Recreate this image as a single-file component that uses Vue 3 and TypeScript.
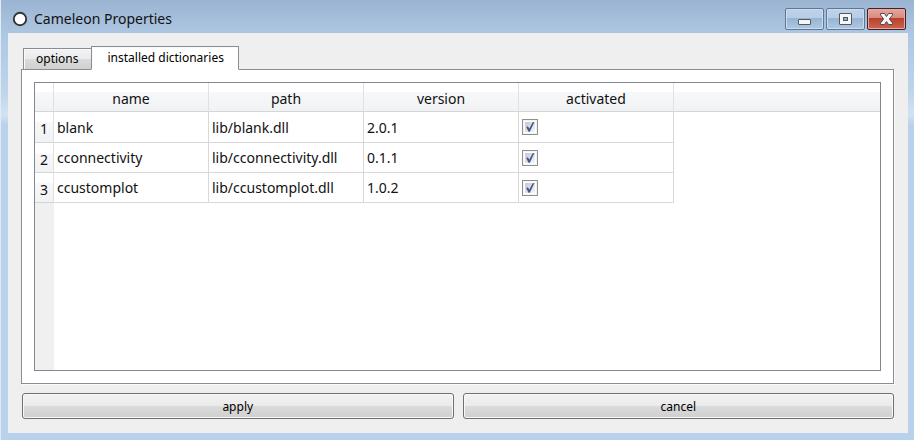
<script setup lang="ts">
import { ref } from 'vue'

interface Dictionary {
  name: string
  path: string
  version: string
  activated: boolean
}

const activeTab = ref<'options' | 'dictionaries'>('dictionaries')
const columns: string[] = ['name', 'path', 'version', 'activated']
const dictionaries = ref<Dictionary[]>([
  { name: 'blank', path: 'lib/blank.dll', version: '2.0.1', activated: true },
  { name: 'cconnectivity', path: 'lib/cconnectivity.dll', version: '0.1.1', activated: true },
  { name: 'ccustomplot', path: 'lib/ccustomplot.dll', version: '1.0.2', activated: true },
])
</script>

<template>
  <div class="window">
    <header class="titlebar">
      <svg class="app-icon" viewBox="0 0 16 16" aria-hidden="true">
        <circle cx="8" cy="8" r="6.2" fill="#fff" stroke="#333638" stroke-width="1.9" />
      </svg>
      <h1 class="title">Cameleon Properties</h1>
      <div class="controls">
        <button class="control" type="button" aria-label="Minimize">
          <svg viewBox="0 0 37 20" aria-hidden="true">
            <rect x="12.5" y="10.5" width="12" height="5" rx="0.5" fill="#f6f6f6" stroke="#505866" />
          </svg>
        </button>
        <button class="control" type="button" aria-label="Maximize">
          <svg viewBox="0 0 37 20" aria-hidden="true">
            <rect x="12.5" y="4.500" width="12" height="11" rx="0.5" fill="#f6f6f6" stroke="#505866" />
            <rect x="16.500" y="8.500" width="4" height="3" fill="#91adca" stroke="#505866" />
          </svg>
        </button>
        <button class="control close" type="button" aria-label="Close">
          <svg viewBox="0 0 37 20" aria-hidden="true">
            <path
              d="M12.500 4.500h4l2 3 2-3h4v1.500l-3.200 4 3.200 4v1.500h-4l-2-3-2 3h-4v-1.500l3.200-4-3.200-4z"
              fill="#f6f6f6"
              stroke="#5b4a52"
              stroke-linejoin="round"
            />
          </svg>
        </button>
      </div>
    </header>

    <main class="content">
      <div class="tabs" role="tablist">
        <button
          class="tab"
          :class="{ active: activeTab === 'options' }"
          type="button"
          role="tab"
          :aria-selected="activeTab === 'options'"
          @click="activeTab = 'options'"
        >
          options
        </button>
        <button
          class="tab"
          :class="{ active: activeTab === 'dictionaries' }"
          type="button"
          role="tab"
          :aria-selected="activeTab === 'dictionaries'"
          @click="activeTab = 'dictionaries'"
        >
          installed dictionaries
        </button>
      </div>

      <section class="panel" role="tabpanel">
        <div v-if="activeTab === 'dictionaries'" class="table-view">
          <table>
            <colgroup>
              <col class="index-col" />
              <col v-for="column in columns" :key="column" class="data-col" />
              <col />
            </colgroup>
            <thead>
              <tr>
                <th></th>
                <th v-for="column in columns" :key="column" scope="col">{{ column }}</th>
                <th class="filler"></th>
              </tr>
            </thead>
            <tbody>
              <tr v-for="(dictionary, index) in dictionaries" :key="dictionary.name">
                <th scope="row">{{ index + 1 }}</th>
                <td>{{ dictionary.name }}</td>
                <td>{{ dictionary.path }}</td>
                <td>{{ dictionary.version }}</td>
                <td>
                  <label class="check">
                    <input
                      v-model="dictionary.activated"
                      type="checkbox"
                      :aria-label="`${dictionary.name} activated`"
                    />
                    <svg v-if="dictionary.activated" viewBox="0 0 16 16" aria-hidden="true">
                      <path d="M4.200 8l1.600-.8 1.500 2.300 3.400-6.200 1.700-.3-4.600 9.800H6.500z" fill="#43588f" />
                    </svg>
                  </label>
                </td>
                <td class="filler"></td>
              </tr>
            </tbody>
          </table>
        </div>
      </section>

      <footer class="actions">
        <button class="action" type="button">apply</button>
        <button class="action" type="button">cancel</button>
      </footer>
    </main>
  </div>
</template>

<style>
body {
  margin: 0;
}
</style>

<style scoped>
* {
  box-sizing: border-box;
}

.window {
  display: flex;
  flex-direction: column;
  min-height: 100vh;
  padding: 0 6px 7px 7px;
  border-left: 1px solid #e4eaf1;
  background: linear-gradient(#9ab4d1, #adc7e3 33px, #bdd4ec 90px, #d2e2f2 115px, #b9d1ea 125px);
  font-family: 'Noto Sans', 'Open Sans', sans-serif;
  font-size: 14px;
  color: #111;
}

.titlebar {
  display: flex;
  align-items: center;
  height: 33px;
  padding: 5px 2px 0 4px;
}

.app-icon {
  width: 16px;
  height: 16px;
}

.title {
  flex: 1;
  margin: 0 0 0 6px;
  font-size: 14px;
  font-weight: 400;
  line-height: 20px;
}

.controls {
  display: flex;
  gap: 2px;
}

.control {
  width: 39px;
  height: 22px;
  padding: 0;
  border: 1px solid #5f7696;
  border-radius: 2px;
  background: linear-gradient(#bdd2e9, #b8cee6 45%, #98b3d0 45%, #adc8e3);
  box-shadow: inset 0 0 0 1px #cbdcef;
}

.control svg {
  display: block;
  width: 37px;
  height: 20px;
}

.close {
  border-color: #44202c;
  background: linear-gradient(#e5a79d, #d98a7e 45%, #b9402b 45%, #cc6550);
  box-shadow: inset 0 0 0 1px #e5aaa0;
}

.content {
  display: flex;
  flex: 1;
  flex-direction: column;
  padding: 13px 14px 14px 13px;
  background: #efefef;
}

.tabs {
  z-index: 1;
  display: flex;
  align-items: flex-end;
  height: 24px;
  margin-bottom: -1px;
  padding-left: 2px;
}

.tab {
  height: 22px;
  padding: 0 12px;
  border: 1px solid #898c95;
  border-right: 0;
  background: linear-gradient(#f2f2f2, #ebebeb 48%, #dcdcdc 48%, #d0d0d0);
  box-shadow: inset 1px 1px #fafafa;
  font-family: inherit;
  font-size: 12px;
  line-height: 20px;
  color: #000;
}

.tab.active {
  height: 24px;
  padding: 0 14px 0 16px;
  border-right: 1px solid #898c95;
  border-bottom-color: #fff;
  background: #fff;
}

.panel {
  display: flex;
  flex: 1;
  padding: 12px;
  border: 1px solid #898c95;
  background: #fff;
  box-shadow: 1px 1px #fafafa;
}

.table-view {
  flex: 1;
  border: 1px solid #828790;
  background: linear-gradient(90deg, #f0f0f0 19px, #fff 19px);
}

table {
  width: 100%;
  border-spacing: 0;
  table-layout: fixed;
  background: #fff;
}

.index-col {
  width: 19px;
}

.data-col {
  width: 155px;
}

th {
  padding: 0;
  border-right: 1px solid #dfe1e3;
  border-bottom: 1px solid #d5d5d5;
  background: linear-gradient(#fff 33%, #f7f8fa 33%, #f1f2f4);
  font-weight: 400;
  text-align: center;
}

thead th {
  height: 29px;
  padding-top: 3px;
}

thead .filler {
  border-right: 0;
}

tbody th,
td {
  height: 30px;
}

tbody th {
  padding-top: 3px;
}

td {
  padding: 0 3px;
  border-right: 1px solid #d8d8d8;
  border-bottom: 1px solid #d8d8d8;
}

td.filler {
  border: 0;
}

tbody tr:first-child td {
  height: 31px;
}

.check {
  position: relative;
  display: block;
  width: 16px;
  height: 16px;
}

.check input {
  display: block;
  width: 16px;
  height: 16px;
  margin: 0;
  appearance: none;
  border: 1px solid #8e8f8f;
  background: linear-gradient(135deg, #c4c9d1, #f6f6f6) content-box;
  padding: 2px;
  box-shadow: inset 0 0 0 1px #f4f4f4;
}

.check svg {
  position: absolute;
  inset: 0;
  pointer-events: none;
}

.actions {
  display: grid;
  grid-template-columns: 1fr 1fr;
  gap: 9px;
  margin: 9px 0 0 1px;
}

.action {
  height: 26px;
  padding: 0;
  border: 1px solid #707070;
  border-radius: 3px;
  background: linear-gradient(#f2f2f2, #ebebeb 48%, #dcdcdc 48%, #cfcfcf);
  box-shadow: inset 0 0 0 1px #f8f8f8;
  font-family: inherit;
  font-size: 12px;
  color: #000;
}
</style>
